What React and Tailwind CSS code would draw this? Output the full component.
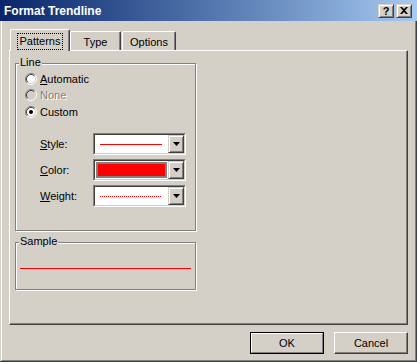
import React from "react";

function Radio({ checked = false, disabled = false }) {
  return (
    <svg width="12" height="12" viewBox="0 0 12 12" className="shrink-0">
      <circle cx="6" cy="6" r="4.5" fill={disabled ? "#d4d0c8" : "#ffffff"} />
      <path d="M2.11 9.89 A5.5 5.5 0 0 1 9.89 2.11" fill="none" stroke="#808080" strokeWidth="1" />
      <path d="M9.89 2.11 A5.5 5.5 0 0 1 2.11 9.89" fill="none" stroke="#ffffff" strokeWidth="1" />
      <path d="M2.82 9.18 A4.5 4.5 0 0 1 9.18 2.82" fill="none" stroke="#404040" strokeWidth="1" />
      <path d="M9.18 2.82 A4.5 4.5 0 0 1 2.82 9.18" fill="none" stroke="#d4d0c8" strokeWidth="1" />
      {checked && <circle cx="6" cy="6" r="2" fill="#000000" />}
    </svg>
  );
}

function DropButton() {
  return (
    <div className="w-[16px] h-full flex items-center justify-center bg-[#d4d0c8] border border-t-[#d4d0c8] border-l-[#d4d0c8] border-r-[#404040] border-b-[#404040] shadow-[inset_1px_1px_0_#ffffff,inset_-1px_-1px_0_#808080]">
      <svg width="7" height="4" viewBox="0 0 7 4">
        <path d="M0 0 H7 L3.5 4 Z" fill="#000000" />
      </svg>
    </div>
  );
}

function Field({ children }) {
  return (
    <div className="w-[93px] h-[22px] border border-t-[#808080] border-l-[#808080] border-r-white border-b-white">
      <div className="w-full h-full border border-t-[#404040] border-l-[#404040] border-r-[#d4d0c8] border-b-[#d4d0c8] bg-white flex">
        <div className="flex-1 flex items-center">{children}</div>
        <DropButton />
      </div>
    </div>
  );
}

function Group({ label, className, children }) {
  return (
    <div className={"relative border border-[#808080] shadow-[inset_1px_1px_0_#ffffff,1px_1px_0_#ffffff] " + className}>
      <span className="absolute left-[3px] -top-[8px] px-px bg-[#d4d0c8] leading-[13px]">{label}</span>
      {children}
    </div>
  );
}

export default function App() {
  return (
    <div className="w-[417px] h-[362px] bg-[#d4d0c8] flex flex-col font-['Liberation_Sans',Arial,sans-serif] text-[11px] text-black overflow-hidden">
      {/* Title bar */}
      <div className="h-[21px] shrink-0 flex items-center bg-gradient-to-r from-[#0a246a] to-[#a6caf0] pl-[4px] pr-[5px]">
        <span className="text-white font-bold text-[12px] leading-none">Format Trendline</span>
        <div className="ml-auto flex gap-[2px]">
          <div className="w-[16px] h-[14px] flex items-center justify-center bg-[#d4d0c8] border border-t-[#d4d0c8] border-l-[#d4d0c8] border-r-[#404040] border-b-[#404040] shadow-[inset_1px_1px_0_#ffffff,inset_-1px_-1px_0_#808080]">
            <span className="font-bold text-[11px] leading-none mt-px">?</span>
          </div>
          <div className="w-[16px] h-[14px] flex items-center justify-center bg-[#d4d0c8] border border-t-[#d4d0c8] border-l-[#d4d0c8] border-r-[#404040] border-b-[#404040] shadow-[inset_1px_1px_0_#ffffff,inset_-1px_-1px_0_#808080]">
            <svg width="8" height="7" viewBox="0 0 8 7">
              <path d="M0 0 H2 L4 2 L6 0 H8 L5 3.5 L8 7 H6 L4 5 L2 7 H0 L3 3.5 Z" fill="#000000" />
            </svg>
          </div>
        </div>
      </div>

      {/* Body */}
      <div className="flex-1 border-r border-b border-[#404040]">
        <div className="h-full ml-px border-l border-white border-r border-b border-r-[#808080] border-b-[#808080] pt-[8px] pl-[7px] pr-[6px] flex flex-col">
          {/* Tabs */}
          <div className="h-[21px] flex items-end pl-px">
            <div className="relative z-10 w-[60px] h-[22px] -mb-px bg-[#d4d0c8] border-l border-t border-white border-r border-r-[#404040] rounded-t-[2px] shadow-[inset_-1px_0_0_#808080] flex items-start justify-center pt-[3px]">
              <span className="px-[2px] h-[17px] leading-[15px] outline outline-1 outline-dotted outline-black -outline-offset-1 border border-transparent">Patterns</span>
            </div>
            <div className="w-[51px] h-[19px] border-l border-t border-white border-r border-r-[#404040] rounded-t-[2px] shadow-[inset_-1px_0_0_#808080] flex items-center justify-center pt-[3px]">
              Type
            </div>
            <div className="ml-px w-[54px] h-[19px] border-l border-t border-white border-r border-r-[#404040] rounded-t-[2px] shadow-[inset_-1px_0_0_#808080] flex items-center justify-center pt-[3px]">
              Options
            </div>
          </div>

          {/* Panel */}
          <div className="w-[399px] h-[275px] border-t border-l border-white border-r border-b border-r-[#404040] border-b-[#404040] shadow-[inset_-1px_-1px_0_#808080] pl-[5px] pt-[12px]">
            <Group label="Line" className="w-[181px] h-[168px]">
              <div className="pl-[9px] pt-[7px] flex flex-col">
                <div className="h-[16px] flex items-center gap-[3px]">
                  <Radio />
                  <span><span className="underline underline-offset-[1px]">A</span>utomatic</span>
                </div>
                <div className="h-[16px] flex items-center gap-[3px]">
                  <Radio disabled />
                  <span className="text-[#808080] [text-shadow:1px_1px_0_#ffffff]">None</span>
                </div>
                <div className="h-[16px] mt-px flex items-center gap-[3px]">
                  <Radio checked />
                  <span>Custom</span>
                </div>
              </div>
              <div className="pl-[24px] mt-[13px] flex flex-col gap-[4px]">
                <div className="flex items-center">
                  <span className="w-[53px]"><span className="underline underline-offset-[1px]">S</span>tyle:</span>
                  <Field>
                    <div className="ml-[5px] w-[62px] h-px bg-[#ff0000]" />
                  </Field>
                </div>
                <div className="flex items-center">
                  <span className="w-[53px]"><span className="underline underline-offset-[1px]">C</span>olor:</span>
                  <Field>
                    <div className="ml-px mr-px w-full h-[16px] bg-[#ff0000] border-2 border-[#808080]" />
                  </Field>
                </div>
                <div className="flex items-center">
                  <span className="w-[53px]"><span className="underline underline-offset-[1px]">W</span>eight:</span>
                  <Field>
                    <div className="ml-[5px] w-[62px] h-px bg-[repeating-linear-gradient(90deg,#ff0000_0px,#ff0000_1px,transparent_1px,transparent_2px)]" />
                  </Field>
                </div>
              </div>
            </Group>

            <Group label="Sample" className="w-[181px] h-[48px] mt-[11px]">
              <div className="pl-[4px] pt-[25px]">
                <div className="w-[171px] h-px bg-[#ff0000]" />
              </div>
            </Group>
          </div>

          {/* Buttons */}
          <div className="mt-[7px] flex justify-end gap-[10px] pr-[1px]">
            <div className="w-[74px] h-[22px] border border-black">
              <div className="w-full h-full border border-t-white border-l-white border-r-[#808080] border-b-[#808080] flex items-center justify-center">
                OK
              </div>
            </div>
            <div className="w-[74px] h-[22px] border border-t-white border-l-white border-r-[#404040] border-b-[#404040] shadow-[inset_-1px_-1px_0_#808080] flex items-center justify-center">
              Cancel
            </div>
          </div>
        </div>
      </div>
    </div>
  );
}
